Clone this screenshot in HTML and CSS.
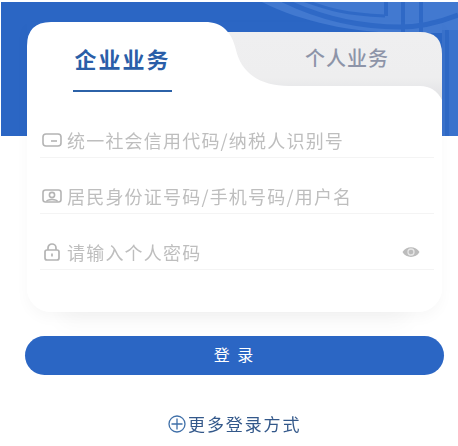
FILE: index.html
```html
<!DOCTYPE html>
<html lang="zh">
<head>
<meta charset="utf-8">
<title>登录</title>
<link rel="stylesheet" href="styles.css">
</head>
<body>
<div class="page">
  <div class="hero">
    <svg class="hero-art" viewBox="0 0 458 134" width="458" height="134">
      <path d="M258,-2 C300,20 350,30 400,31 H458 V-2 Z" fill="#4279d0"/>
      <path d="M442,28 H458 V134 H442 Z" fill="#3a72cc"/>
      <g fill="none" stroke="#2f69c6">
        <path d="M283,-2 C320,16 360,25 400,25 C420,25 440,20 458,13" stroke-width="5"/>
        <path d="M303,-2 C330,8 345,12 385,14" stroke-width="3"/>
        <path d="M386,0 V14 M403,0 V30 M421,0 V30" stroke-width="4"/>
        <path d="M447,28 V134" stroke-width="4"/>
      </g>
    </svg>
  </div>
  <main class="card">
    <div class="tabs">
      <svg class="tabs-shape" viewBox="0 0 415 80" width="415" height="80">
        <defs>
          <linearGradient id="g" x1="0" y1="0" x2="0" y2="1">
            <stop offset="0" stop-color="#efeff0"/>
            <stop offset="0.65" stop-color="#eeeeef"/>
            <stop offset="1" stop-color="#dfe0e3"/>
          </linearGradient>
        </defs>
        <path d="M190,10 H393 Q415,10 415,32 V80 H190 Z" fill="url(#g)"/>
        <path d="M0,80 V24 Q0,0 24,0 H178 C195,0 205,10 209,28 C214,50 232,64 262,64 H393 Q408,64 415,78 V80 Z" fill="#fff"/>
      </svg>
      <div class="tab tab-active">企业业务</div>
      <div class="tab tab-other">个人业务</div>
    </div>
    <form class="fields">
      <div class="field">
        <svg class="icon" viewBox="0 0 20 14" width="20" height="14" fill="none" stroke="#b4b4b4" stroke-width="1.6"><rect x="1" y="1" width="18" height="12" rx="3"/><path d="M9 8H15"/></svg>
        <span class="ph">统一社会信用代码/纳税人识别号</span>
      </div>
      <div class="field">
        <svg class="icon" viewBox="0 0 20 14" width="20" height="14" fill="none" stroke="#b4b4b4" stroke-width="1.6"><rect x="1" y="1" width="18" height="12" rx="2.5"/><circle cx="10" cy="6" r="2.6"/><path d="M4.500 12.500C5.500 9.800 14.500 9.800 15.500 12.500"/></svg>
        <span class="ph">居民身份证号码/手机号码/用户名</span>
      </div>
      <div class="field">
        <svg class="icon" viewBox="0 0 20 18" width="20" height="18" fill="none" stroke="#b4b4b4" stroke-width="1.7"><rect x="3" y="7" width="14" height="10" rx="2"/><path d="M6 7V5a4 4 0 0 1 8 0v2M10 10.500v3"/></svg>
        <span class="ph">请输入个人密码</span>
        <svg class="eye" viewBox="0 0 18 12" width="18" height="12"><path d="M0.500 6C4 -0.500 14 -0.500 17.500 6C14 12.500 4 12.500 0.500 6Z" fill="#bcbcbc"/><circle cx="9" cy="6" r="3" fill="none" stroke="#e6e6e6" stroke-width="1.300"/></svg>
      </div>
    </form>
  </main>
  <button class="login" type="button">登 录</button>
  <a class="more">
    <svg viewBox="0 0 18 18" width="18" height="18" fill="none" stroke="#3f6fa8" stroke-width="1.300"><circle cx="9" cy="9" r="8"/><path d="M3.500 9H14.500M9 3.500V14.500"/></svg>
    <span>更多登录方式</span>
  </a>
</div>
</body>
</html>
```
FILE: styles.css
```css
* { box-sizing: border-box; }
html, body { margin: 0; padding: 0; background: #fff; }
body { font-family: "Noto Sans CJK SC", "Noto Sans", sans-serif; }
.page {
  position: relative;
  width: 458px;
  height: 446px;
  overflow: hidden;
  padding-top: 22px;
  display: flex;
  flex-direction: column;
  align-items: flex-start;
  filter: blur(.35px);
}
.hero {
  position: absolute;
  left: 1px;
  right: 0;
  top: 2px;
  height: 134px;
  background: #2b66c4;
  overflow: hidden;
}
.hero-art { display: block; margin-left: -1px; }
.card {
  position: relative;
  width: 415px;
  height: 290px;
  margin-left: 27px;
  border-radius: 0 0 24px 24px;
  box-shadow: 0 44px 22px -34px rgba(0,0,0,.04), 0 6px 14px rgba(0,0,0,.03);
  background: linear-gradient(to bottom, transparent 0, transparent 80px, #fff 80px);
}
.tabs {
  position: relative;
  height: 80px;
}
.tabs-shape { position: absolute; left: 0; top: 0; display: block; }
.tab {
  position: absolute;
  top: 20px;
  line-height: 32px;
}
.tab-active {
  left: 46px;
  width: 99px;
  height: 50px;
  border-bottom: 2px solid #2c62a8;
  color: #2a5ea8;
  font-size: 22px;
  font-weight: 700;
  letter-spacing: 2px;
  text-align: center;
  white-space: nowrap;
}
.tab-other {
  left: 278px;
  color: #8d94a8;
  font-size: 20px;
  font-weight: 500;
  letter-spacing: 1px;
  white-space: nowrap;
}
.fields {
  margin: 0;
  padding: 0 8px 0 13px;
}
.field {
  height: 56px;
  display: flex;
  align-items: center;
  padding: 20px 0 0 2px;
  border-bottom: 1px solid #f4f4f4;
}
.icon { flex: none; margin-right: 5px; }
.ph {
  color: #bebebe;
  font-size: 18px;
  letter-spacing: 1.200px;
  white-space: nowrap;
}
.eye { margin-left: auto; margin-right: 14px; }
.login {
  margin: 24px 0 0 25px;
  padding: 0 0 3px;
  width: 419px;
  height: 39px;
  border: 0;
  border-radius: 20px;
  background: #2b66c4;
  color: #fff;
  font: 400 16px "Noto Sans CJK SC", sans-serif;
  letter-spacing: 2px;
}
.more {
  margin: 38px 0 0 168px;
  display: flex;
  align-items: center;
  gap: 2px;
  color: #33588a;
  font-size: 17px;
  letter-spacing: 1.900px;
  line-height: 22px;
  white-space: nowrap;
}
```
